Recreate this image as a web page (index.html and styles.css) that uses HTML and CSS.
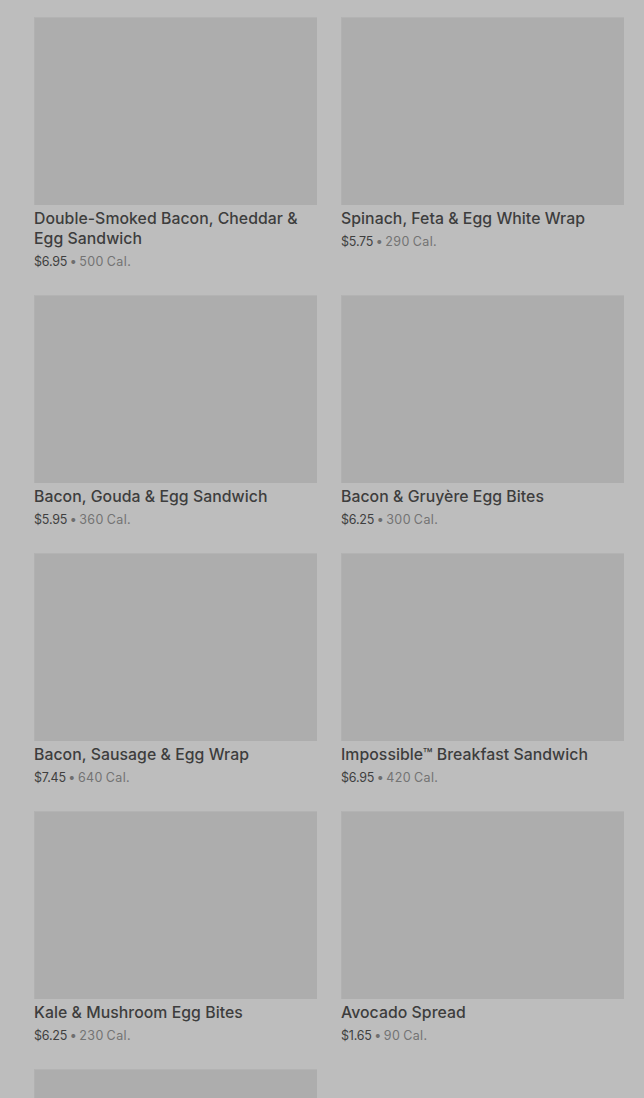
FILE: index.html
```html
<!DOCTYPE html>
<html>
<head>
<meta charset="utf-8">
<link rel="stylesheet" href="styles.css">
</head>
<body>
<main class="grid">
  <div class="card"><div class="img"></div><div class="title">Double-Smoked Bacon, Cheddar &amp; Egg Sandwich</div><div class="meta"><span class="price">$6.95</span> • <span class="cal">500 Cal.</span></div></div>
  <div class="card"><div class="img"></div><div class="title">Spinach, Feta &amp; Egg White Wrap</div><div class="meta"><span class="price">$5.75</span> • <span class="cal">290 Cal.</span></div></div>
  <div class="card"><div class="img"></div><div class="title">Bacon, Gouda &amp; Egg Sandwich</div><div class="meta"><span class="price">$5.95</span> • <span class="cal">360 Cal.</span></div></div>
  <div class="card"><div class="img"></div><div class="title">Bacon &amp; Gruyère Egg Bites</div><div class="meta"><span class="price">$6.25</span> • <span class="cal">300 Cal.</span></div></div>
  <div class="card"><div class="img"></div><div class="title">Bacon, Sausage &amp; Egg Wrap</div><div class="meta"><span class="price">$7.45</span> • <span class="cal">640 Cal.</span></div></div>
  <div class="card"><div class="img"></div><div class="title">Impossible™ Breakfast Sandwich</div><div class="meta"><span class="price">$6.95</span> • <span class="cal">420 Cal.</span></div></div>
  <div class="card"><div class="img"></div><div class="title">Kale &amp; Mushroom Egg Bites</div><div class="meta"><span class="price">$6.25</span> • <span class="cal">230 Cal.</span></div></div>
  <div class="card"><div class="img"></div><div class="title">Avocado Spread</div><div class="meta"><span class="price">$1.65</span> • <span class="cal">90 Cal.</span></div></div>
  <div class="card"><div class="img"></div></div>
</main>
</body>
</html>
```
FILE: styles.css
```css
html, body {
  margin: 0;
  padding: 0;
  background: #bdbdbd;
  height: 1098px;
  overflow: hidden;
}
body {
  font-family: Inter, "Noto Sans", sans-serif;
}
.grid {
  display: grid;
  grid-template-columns: 283px 283px;
  column-gap: 24px;
  row-gap: 24px;
  padding: 17px 0 0 34px;
}
.img {
  height: 188px;
  background: #adadad;
  border-top: 1px solid #b3b3b3;
  border-left: 1px solid #b1b1b1;
  box-sizing: border-box;
  margin-bottom: 4px;
}
.title {
  font-size: 15.8px;
  line-height: 20px;
  font-weight: 500;
  color: #3d3d3d;
  letter-spacing: 0.05px;
}
.meta {
  margin-top: 4px;
  font-size: 12.5px;
  line-height: 18px;
  color: #6e6e6e;
  word-spacing: -1px;
}
.price {
  color: #3f3f3f;
  letter-spacing: -0.2px;
}
.cal {
  color: #737373;
  letter-spacing: 0.4px;
}
```
